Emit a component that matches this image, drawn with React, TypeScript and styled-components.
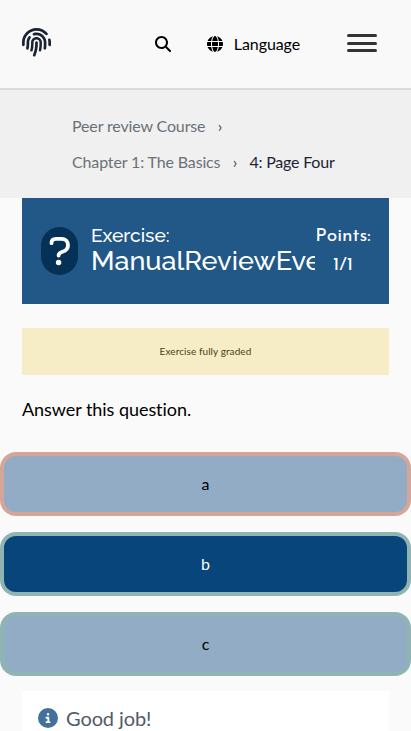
import React from "react";
import styled, { createGlobalStyle } from "styled-components";
import {
  FaFingerprint,
  FaMagnifyingGlass,
  FaGlobe,
  FaCircleInfo,
} from "react-icons/fa6";

const GlobalStyle = createGlobalStyle`
  *, *::before, *::after { box-sizing: border-box; }
  html { overflow: hidden; }
  body {
    margin: 0;
    background: #fafafa;
    color: #000;
    font-family: Lato, "Open Sans", sans-serif;
    font-size: 16px;
    font-variant-ligatures: none;
  }
`;

const Page = styled.div`
  height: 731px;
  overflow: hidden;
`;

const Header = styled.header`
  display: flex;
  align-items: center;
  height: 90px;
  padding: 0 34px 0 22px;
  background: #f9f9f9;
  border-bottom: 2px solid #dcdcdc;
`;

const Logo = styled.a`
  display: flex;
  color: #1a2333;
  margin-right: auto;
  padding-bottom: 3px;
`;

const SearchButton = styled.button`
  display: flex;
  padding: 0;
  border: 0;
  background: none;
  color: #000;
  margin-right: 36px;
`;

const LanguageButton = styled.button`
  display: flex;
  align-items: center;
  gap: 11px;
  padding: 0;
  border: 0;
  background: none;
  color: #000;
  font: 16px/20px Lato, sans-serif;
  letter-spacing: -0.1px;
  margin-right: 47px;
`;

const MenuButton = styled.button`
  display: grid;
  grid-template-rows: 3px 3px 3px;
  row-gap: 4.5px;
  width: 30px;
  padding: 0;
  border: 0;
  background: none;
  margin-bottom: 2px;
`;

const MenuBar = styled.span`
  height: 3px;
  border-radius: 2px;
  background: #333;
`;

const Breadcrumbs = styled.nav`
  height: 108px;
  padding: 18px 72px;
  background: #f0f0f0;
`;

const CrumbRow = styled.div`
  display: flex;
  height: 36px;
  line-height: 36px;
  white-space: nowrap;
`;

const Crumb = styled.span<{ $current?: boolean }>`
  color: ${(p) => (p.$current ? "#1a2333" : "#6b7078")};
  letter-spacing: ${(p) => (p.$current ? "-0.2px" : "-0.14px")};
`;

const Separator = styled.span`
  width: 29px;
  text-align: center;
  color: #3b4754;
`;

const Content = styled.main`
  padding: 0 22px;
`;

const ExerciseHeader = styled.section`
  display: flex;
  height: 106px;
  padding: 0 18px 0 19px;
  background: #215887;
  color: #fff;
`;

const HelpBadge = styled.div`
  display: flex;
  flex: none;
  width: 37px;
  height: 48px;
  margin-top: 29px;
  border-radius: 18.5px;
  background: #063157;
`;

const Title = styled.h2`
  width: 224px;
  margin: 27px 0 0 13px;
  overflow: hidden;
  white-space: nowrap;
  font-weight: 500;
  font-family: Raleway, Lato, sans-serif;
`;

const TitleLabel = styled.span`
  display: block;
  font-size: 19.2px;
  line-height: 21px;
`;

const TitleName = styled.span`
  display: block;
  font-size: 27px;
  line-height: 30px;
`;

const Points = styled.div`
  flex: none;
  width: 56px;
  padding-top: 24px;
  text-align: center;
  white-space: nowrap;
  font-family: "Josefin Sans", Lato, sans-serif;
  font-size: 19.2px;
  line-height: 29px;
`;

const PointsValue = styled.span`
  display: block;
`;

const Notice = styled.div`
  height: 47px;
  margin-top: 24px;
  background: #f6edc7;
  color: #493f13;
  font-size: 10px;
  letter-spacing: 0.08px;
  line-height: 47px;
  text-align: center;
`;

const Question = styled.p`
  margin: 20px 0 28px;
  font-size: 18px;
  line-height: 29px;
  letter-spacing: -0.05px;
`;

const Options = styled.div`
  display: flex;
  flex-direction: column;
  gap: 16px;
`;

const Option = styled.button<{ $correct?: boolean; $selected?: boolean }>`
  height: 64px;
  padding: 0;
  border: 4px solid ${(p) => (p.$correct ? "#8fb4b1" : "#d6a599")};
  border-radius: 16px;
  background: ${(p) => (p.$selected ? "#08457a" : "#93acc6")};
  color: ${(p) => (p.$selected ? "#fff" : "#000")};
  font: 16px/24px Lato, sans-serif;
`;

const Feedback = styled.div`
  display: flex;
  align-items: center;
  gap: 8px;
  height: 60px;
  margin-top: 15px;
  padding: 0 16px 6px;
  background: #fff;
  color: #535a66;
  font-size: 20px;
  letter-spacing: -0.1px;
`;

const InfoMark = styled.span`
  display: flex;
  color: #44719a;
`;

export default function App() {
  return (
    <Page>
      <GlobalStyle />
      <Header>
        <Logo aria-label="Home">
          <FaFingerprint size={29} />
        </Logo>
        <SearchButton aria-label="Search">
          <FaMagnifyingGlass size={16} />
        </SearchButton>
        <LanguageButton>
          <FaGlobe size={16} />
          Language
        </LanguageButton>
        <MenuButton aria-label="Menu">
          <MenuBar />
          <MenuBar />
          <MenuBar />
        </MenuButton>
      </Header>
      <Breadcrumbs>
        <CrumbRow>
          <Crumb>Peer review Course</Crumb>
          <Separator>›</Separator>
        </CrumbRow>
        <CrumbRow>
          <Crumb>Chapter 1: The Basics</Crumb>
          <Separator>›</Separator>
          <Crumb $current>4: Page Four</Crumb>
        </CrumbRow>
      </Breadcrumbs>
      <Content>
        <ExerciseHeader>
          <HelpBadge>
            <svg width="37" height="48" viewBox="0 0 37 48" fill="none">
              <path
                d="M10.5 16.2C10.5 13 12.5 11.9 15 11.9H20.5C24.5 11.9 27 14.6 27 18.2C27 21.8 24.5 23.8 21.5 24.7C18.8 25.5 17.6 26.3 17.6 28.6"
                stroke="#fff"
                strokeWidth="3.8"
                strokeLinecap="round"
              />
              <circle cx="17.6" cy="35.5" r="2.7" fill="#fff" />
            </svg>
          </HelpBadge>
          <Title>
            <TitleLabel>Exercise:</TitleLabel>
            <TitleName>ManualReviewEve</TitleName>
          </Title>
          <Points>
            Points:
            <PointsValue>1/1</PointsValue>
          </Points>
        </ExerciseHeader>
        <Notice>Exercise fully graded</Notice>
        <Question>Answer this question.</Question>
      </Content>
      <Options>
        <Option>a</Option>
        <Option $correct $selected>b</Option>
        <Option $correct>c</Option>
      </Options>
      <Content>
        <Feedback>
          <InfoMark>
            <FaCircleInfo size={20} />
          </InfoMark>
          Good job!
        </Feedback>
      </Content>
    </Page>
  );
}
